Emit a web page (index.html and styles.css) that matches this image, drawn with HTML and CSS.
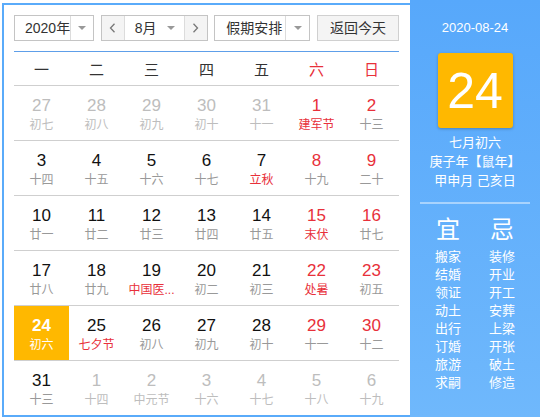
FILE: index.html
```html
<!DOCTYPE html>
<html lang="zh-CN">
<head>
<meta charset="utf-8">
<title>万年历</title>
<link rel="stylesheet" href="styles.css">
</head>
<body>
<div class="calendar">
  <div class="main">
    <div class="toolbar">
      <div class="select sel-year">
        <span class="sel-text">2020年</span>
        <span class="sel-arrow"><i class="tri"></i></span>
      </div>
      <div class="select sel-month">
        <span class="nav nav-prev"><svg width="7" height="10" viewBox="0 0 7 10"><polyline points="5.5,0.8 1.5,5 5.5,9.2" fill="none" stroke="#777" stroke-width="1.3"/></svg></span>
        <span class="month-mid"><span class="month-text">8月</span><i class="tri"></i></span>
        <span class="nav nav-next"><svg width="7" height="10" viewBox="0 0 7 10"><polyline points="1.5,0.8 5.5,5 1.5,9.2" fill="none" stroke="#777" stroke-width="1.3"/></svg></span>
      </div>
      <div class="select sel-holiday">
        <span class="sel-text">假期安排</span>
        <span class="sel-arrow"><i class="tri"></i></span>
      </div>
      <div class="btn-today">返回今天</div>
    </div>
    <div class="weekdays">
      <span>一</span><span>二</span><span>三</span><span>四</span><span>五</span><span class="red">六</span><span class="red">日</span>
    </div>
    <div class="weeks">
      <div class="week">
        <div class="cell other"><span class="num">27</span><span class="lunar">初七</span></div>
        <div class="cell other"><span class="num">28</span><span class="lunar">初八</span></div>
        <div class="cell other"><span class="num">29</span><span class="lunar">初九</span></div>
        <div class="cell other"><span class="num">30</span><span class="lunar">初十</span></div>
        <div class="cell other"><span class="num">31</span><span class="lunar">十一</span></div>
        <div class="cell weekend"><span class="num">1</span><span class="lunar fest">建军节</span></div>
        <div class="cell weekend"><span class="num">2</span><span class="lunar">十三</span></div>
      </div>
      <div class="week">
        <div class="cell"><span class="num">3</span><span class="lunar">十四</span></div>
        <div class="cell"><span class="num">4</span><span class="lunar">十五</span></div>
        <div class="cell"><span class="num">5</span><span class="lunar">十六</span></div>
        <div class="cell"><span class="num">6</span><span class="lunar">十七</span></div>
        <div class="cell"><span class="num">7</span><span class="lunar fest">立秋</span></div>
        <div class="cell weekend"><span class="num">8</span><span class="lunar">十九</span></div>
        <div class="cell weekend"><span class="num">9</span><span class="lunar">二十</span></div>
      </div>
      <div class="week">
        <div class="cell"><span class="num">10</span><span class="lunar">廿一</span></div>
        <div class="cell"><span class="num">11</span><span class="lunar">廿二</span></div>
        <div class="cell"><span class="num">12</span><span class="lunar">廿三</span></div>
        <div class="cell"><span class="num">13</span><span class="lunar">廿四</span></div>
        <div class="cell"><span class="num">14</span><span class="lunar">廿五</span></div>
        <div class="cell weekend"><span class="num">15</span><span class="lunar fest">末伏</span></div>
        <div class="cell weekend"><span class="num">16</span><span class="lunar">廿七</span></div>
      </div>
      <div class="week">
        <div class="cell"><span class="num">17</span><span class="lunar">廿八</span></div>
        <div class="cell"><span class="num">18</span><span class="lunar">廿九</span></div>
        <div class="cell"><span class="num">19</span><span class="lunar fest">中国医...</span></div>
        <div class="cell"><span class="num">20</span><span class="lunar">初二</span></div>
        <div class="cell"><span class="num">21</span><span class="lunar">初三</span></div>
        <div class="cell weekend"><span class="num">22</span><span class="lunar fest">处暑</span></div>
        <div class="cell weekend"><span class="num">23</span><span class="lunar">初五</span></div>
      </div>
      <div class="week">
        <div class="cell today"><span class="num">24</span><span class="lunar">初六</span></div>
        <div class="cell"><span class="num">25</span><span class="lunar fest">七夕节</span></div>
        <div class="cell"><span class="num">26</span><span class="lunar">初八</span></div>
        <div class="cell"><span class="num">27</span><span class="lunar">初九</span></div>
        <div class="cell"><span class="num">28</span><span class="lunar">初十</span></div>
        <div class="cell weekend"><span class="num">29</span><span class="lunar">十一</span></div>
        <div class="cell weekend"><span class="num">30</span><span class="lunar">十二</span></div>
      </div>
      <div class="week">
        <div class="cell"><span class="num">31</span><span class="lunar">十三</span></div>
        <div class="cell other"><span class="num">1</span><span class="lunar">十四</span></div>
        <div class="cell other"><span class="num">2</span><span class="lunar">中元节</span></div>
        <div class="cell other"><span class="num">3</span><span class="lunar">十六</span></div>
        <div class="cell other"><span class="num">4</span><span class="lunar">十七</span></div>
        <div class="cell other"><span class="num">5</span><span class="lunar">十八</span></div>
        <div class="cell other"><span class="num">6</span><span class="lunar">十九</span></div>
      </div>
    </div>
  </div>
  <div class="side">
    <div class="side-date">2020-08-24</div>
    <div class="big-day">24</div>
    <div class="side-lunar">
      <div>七月初六</div>
      <div>庚子年【鼠年】</div>
      <div>甲申月 己亥日</div>
    </div>
    <div class="side-sep"></div>
    <div class="yiji-head"><span>宜</span><span>忌</span></div>
    <div class="yiji-list">
      <span>搬家</span><span>装修</span>
      <span>结婚</span><span>开业</span>
      <span>领证</span><span>开工</span>
      <span>动土</span><span>安葬</span>
      <span>出行</span><span>上梁</span>
      <span>订婚</span><span>开张</span>
      <span>旅游</span><span>破土</span>
      <span>求嗣</span><span>修造</span>
    </div>
  </div>
</div>
</body>
</html>
```

FILE: styles.css
```css
html, body {
  margin: 0;
  padding: 0;
  background: #fff;
}
body {
  font-family: "Liberation Sans", "Noto Sans CJK SC", sans-serif;
  color: #333;
}
.calendar {
  display: flex;
  width: 538px;
  height: 414px;
  margin: 3px 0 0 2px;
  box-sizing: border-box;
  border: 2px solid #5aabfa;
  overflow: visible;
}
.main {
  width: 406px;
  box-sizing: border-box;
  padding: 10px 11px 0 10px;
  overflow: hidden;
}
.toolbar {
  display: flex;
  justify-content: space-between;
  height: 26px;
  padding-bottom: 10px;
  border-bottom: 1px solid #5e9fe9;
}
.select {
  display: flex;
  box-sizing: border-box;
  height: 26px;
  border: 1px solid #c4c4c4;
  font-size: 14px;
  line-height: 24px;
  color: #333;
}
.sel-year { width: 80px; }
.sel-month { width: 107px; }
.sel-holiday { width: 96px; }
.sel-text {
  flex: 1;
  padding-left: 10px;
  white-space: nowrap;
}
.sel-holiday .sel-text { padding-left: 11px; }
.sel-arrow {
  width: 23px;
  border-left: 1px solid #dcdcdc;
  display: flex;
  align-items: center;
  justify-content: center;
}
.tri {
  display: block;
  width: 0;
  height: 0;
  border-left: 4px solid transparent;
  border-right: 4px solid transparent;
  border-top: 4px solid #999;
}
.nav {
  width: 22px;
  background: #f4f4f4;
  display: flex;
  align-items: center;
  justify-content: center;
}
.nav-prev { border-right: 1px solid #dcdcdc; }
.nav-next { border-left: 1px solid #dcdcdc; }
.month-mid {
  flex: 1;
  display: flex;
  align-items: center;
  padding-left: 10px;
  padding-right: 9px;
}
.month-text { flex: 1; }
.btn-today {
  width: 82px;
  height: 26px;
  box-sizing: border-box;
  border: 1px solid #d0d0d0;
  background: #f4f4f4;
  font-size: 14px;
  line-height: 24px;
  text-align: center;
  color: #333;
}
.weekdays {
  display: grid;
  grid-template-columns: repeat(7, 1fr);
  height: 33px;
  align-items: center;
  text-align: center;
  font-size: 15px;
  color: #333;
  border-bottom: 1px solid #cfcfcf;
}
.red { color: #e8303a; }
.week {
  display: grid;
  grid-template-columns: repeat(7, 1fr);
  border-bottom: 1px solid #cfcfcf;
}
.week:last-child { border-bottom: none; }
.cell {
  height: 54px;
  box-sizing: border-box;
  padding-top: 10px;
  display: flex;
  flex-direction: column;
  align-items: center;
  color: #111;
}
.num {
  font-size: 17px;
  line-height: 20px;
}
.lunar {
  font-size: 12px;
  line-height: 16px;
  margin-top: 1px;
  color: #999;
  white-space: nowrap;
}
.lunar.fest { color: #e8303a; }
.weekend .num { color: #e8303a; }
.other .num, .other .lunar { color: #bdbdbd; }
.today {
  background: #ffb800;
}
.today .num, .today .lunar {
  color: #fff;
}
.today .num { font-weight: bold; }
.side {
  width: 130px;
  margin: -5px -2px 0 0;
  height: 417px;
  background: linear-gradient(#57a8fb, #6fb8fc);
  display: flex;
  flex-direction: column;
  align-items: center;
  color: #fff;
  box-sizing: border-box;
  padding-top: 19px;
}
.side-date {
  font-size: 13px;
  line-height: 18px;
}
.big-day {
  margin-top: 16px;
  width: 75px;
  height: 75px;
  background: #ffb800;
  border-radius: 3px;
  box-shadow: 0 1px 3px rgba(0, 0, 0, 0.25);
  display: flex;
  align-items: center;
  justify-content: center;
  font-size: 50px;
  line-height: 1;
  color: #fff;
}
.side-lunar {
  margin-top: 5px;
  font-size: 13px;
  line-height: 19px;
  text-align: center;
}
.side-sep {
  margin-top: 12px;
  width: 110px;
  height: 2px;
  background: rgba(255, 255, 255, 0.45);
}
.yiji-head {
  margin-top: 11px;
  display: grid;
  grid-template-columns: 54px 54px;
  text-align: center;
  font-size: 24px;
  line-height: 30px;
}
.yiji-list {
  margin-top: 3px;
  display: grid;
  grid-template-columns: 54px 54px;
  text-align: center;
  font-size: 13px;
  line-height: 18px;
}
```
